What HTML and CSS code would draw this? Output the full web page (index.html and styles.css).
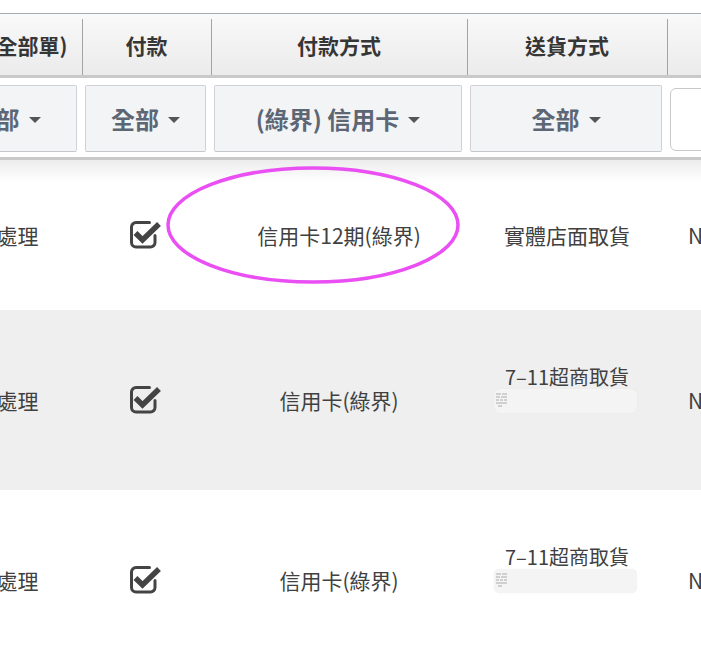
FILE: index.html
```html
<!DOCTYPE html>
<html lang="zh-Hant">
<head>
<meta charset="utf-8">
<link rel="stylesheet" href="styles.css">
</head>
<body>
<div class="wrap">
  <table class="grid">
    <colgroup>
      <col class="c1"><col class="c2"><col class="c3"><col class="c4"><col class="c5">
    </colgroup>
    <thead>
      <tr class="head">
        <th>狀態(全部單)</th>
        <th class="sep">付款</th>
        <th class="sep">付款方式</th>
        <th class="sep">送貨方式</th>
        <th class="sep">金額</th>
      </tr>
      <tr class="filters">
        <td><div class="pick">全部<span class="caret"></span></div></td>
        <td><div class="pick">全部<span class="caret"></span></div></td>
        <td><div class="pick">(綠界) 信用卡<span class="caret"></span></div></td>
        <td><div class="pick">全部<span class="caret"></span></div></td>
        <td><div class="field"></div></td>
      </tr>
    </thead>
    <tbody>
      <tr class="row r1">
        <td>待處理</td>
        <td><svg class="chk" viewBox="0 0 32 30" width="32" height="30"><path d="M19.5 3.5H6A4.5 4.5 0 0 0 1.5 8V23.5A4.5 4.5 0 0 0 6 28H20.5A4.5 4.5 0 0 0 25 23.5V16.5" fill="none" stroke="#444" stroke-width="3" stroke-linecap="round"/><path d="M5.5 14L12.5 21L29 5" fill="none" stroke="#444" stroke-width="5.5" stroke-linejoin="miter"/></svg></td>
        <td>信用卡12期(綠界)</td>
        <td>實體店面取貨</td>
        <td class="amt">NT$3,980</td>
      </tr>
      <tr class="row r2">
        <td>待處理</td>
        <td><svg class="chk" viewBox="0 0 32 30" width="32" height="30"><path d="M19.5 3.5H6A4.5 4.5 0 0 0 1.5 8V23.5A4.5 4.5 0 0 0 6 28H20.5A4.5 4.5 0 0 0 25 23.5V16.5" fill="none" stroke="#444" stroke-width="3" stroke-linecap="round"/><path d="M5.5 14L12.5 21L29 5" fill="none" stroke="#444" stroke-width="5.5" stroke-linejoin="miter"/></svg></td>
        <td>信用卡(綠界)</td>
        <td>
          <div class="ship">7–11超商取貨</div>
          <div class="store"><svg viewBox="0 0 14 22" width="14" height="22"><g stroke="#9a9a9a" stroke-width="0.8"><path d="M1 4h5M7 4h5M1 7h4M6 7h6M1 10h3M5 10h3M9 10h3M1 13h11M3 16h4"/></g></svg></div>
        </td>
        <td class="amt">NT$2,450</td>
      </tr>
      <tr class="row r3">
        <td>待處理</td>
        <td><svg class="chk" viewBox="0 0 32 30" width="32" height="30"><path d="M19.5 3.5H6A4.5 4.5 0 0 0 1.5 8V23.5A4.5 4.5 0 0 0 6 28H20.5A4.5 4.5 0 0 0 25 23.5V16.5" fill="none" stroke="#444" stroke-width="3" stroke-linecap="round"/><path d="M5.5 14L12.5 21L29 5" fill="none" stroke="#444" stroke-width="5.5" stroke-linejoin="miter"/></svg></td>
        <td>信用卡(綠界)</td>
        <td>
          <div class="ship">7–11超商取貨</div>
          <div class="store"><svg viewBox="0 0 14 22" width="14" height="22"><g stroke="#9a9a9a" stroke-width="0.8"><path d="M1 4h5M7 4h5M1 7h4M6 7h6M1 10h3M5 10h3M9 10h3M1 13h11M3 16h4"/></g></svg></div>
        </td>
        <td class="amt">NT$1,260</td>
      </tr>
    </tbody>
  </table>
  <svg class="mark" viewBox="0 0 300 124" width="300" height="124"><ellipse cx="150" cy="62" rx="145" ry="57" fill="none" stroke="#e94ff2" stroke-width="3.5"/></svg>
</div>
</body>
</html>
```
FILE: styles.css
```css
html, body {
  margin: 0;
  padding: 0;
  background: #fff;
}
body {
  font-family: "Noto Sans CJK TC", "Noto Sans", sans-serif;
  color: #404040;
}
.wrap {
  position: relative;
  width: 701px;
  height: 654px;
  overflow: hidden;
  padding-top: 13px;
  box-sizing: border-box;
}
.grid {
  margin-left: -68px;
  border-collapse: separate;
  border-spacing: 0;
  table-layout: fixed;
  width: 885px;
}
.c1 { width: 150px; }
.c2 { width: 129px; }
.c3 { width: 256px; }
.c4 { width: 200px; }
.c5 { width: 150px; }

.head th {
  height: 65px;
  padding: 0;
  font-size: 21px;
  font-weight: bold;
  color: #363636;
  text-align: center;
  border-top: 1px solid #a4acb5;
  border-bottom: 3px solid #c9c9c9;
  background: linear-gradient(#f9f9f9, #ebebeb);
  box-sizing: border-box;
}
.head th.sep {
  background:
    linear-gradient(#a3a3a3, #a3a3a3) left 5px / 1px calc(100% - 5px) no-repeat,
    linear-gradient(#f9f9f9, #ebebeb);
}

.filters td {
  padding: 7px 5px 5px 3px;
  height: 67px;
  border-bottom: 3px solid #c9c9c9;
  background: #fff;
}
.pick {
  height: 67px;
  box-sizing: border-box;
  border: 1px solid #cfd3d8;
  border-bottom-color: #c3c7cc;
  border-radius: 2px;
  background: #f3f4f6;
  display: flex;
  align-items: center;
  justify-content: center;
  gap: 9px;
  font-size: 24px;
  font-weight: bold;
  color: #5d6674;
}
.caret {
  width: 0;
  height: 0;
  border-left: 6px solid transparent;
  border-right: 6px solid transparent;
  border-top: 6px solid #555;
  margin-top: 2px;
}
.field {
  height: 63px;
  margin-top: 2px;
  box-sizing: border-box;
  border: 1px solid #c8c8c8;
  border-radius: 6px;
  background: #fff;
}

.row td {
  text-align: center;
  vertical-align: middle;
  font-size: 21px;
  color: #404040;
  padding: 0;
}
.row td.amt {
  text-align: left;
  padding-left: 21px;
}
.r1 td {
  height: 150px;
  background: linear-gradient(#ececec 0, #fff 22px);
}
.r2 td {
  height: 180px;
  background: #efefef;
}
.r3 td {
  height: 180px;
  background: #fff;
}
.chk {
  display: block;
  margin: 0 auto;
  position: relative;
  left: -1px;
  top: -1px;
}
.ship {
  font-size: 20px;
  line-height: 24px;
}
.store {
  width: 143px;
  height: 24px;
  margin: 0 auto 22px;
  position: relative;
  left: -2px;
  border-radius: 6px;
  background: #f4f4f4;
  box-shadow: 0 0 1px #e2e2e2;
  display: flex;
  align-items: center;
  padding-left: 1px;
  box-sizing: border-box;
}
.mark {
  position: absolute;
  left: 163px;
  top: 163px;
}
```
